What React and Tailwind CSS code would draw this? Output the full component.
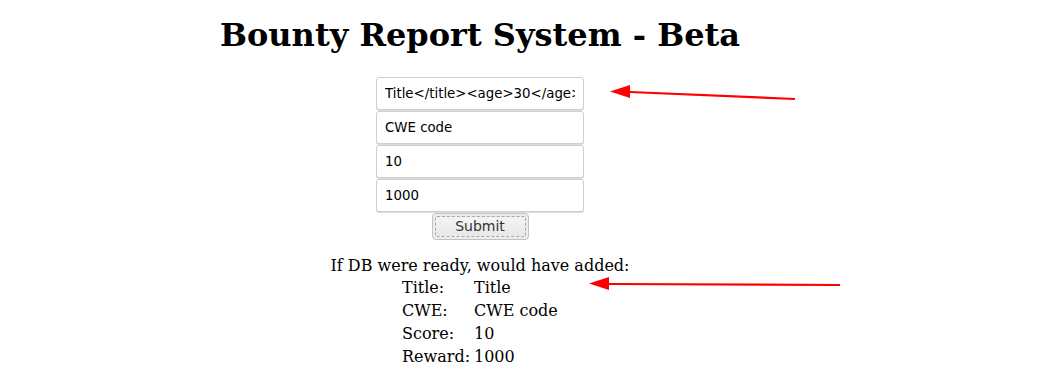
import React from 'react';

const fields = ['Title</title><age>30</age>', 'CWE code', '10', '1000'];

const rows = [
  ['Title:', 'Title'],
  ['CWE:', 'CWE code'],
  ['Score:', '10'],
  ['Reward:', '1000'],
];

const Arrow = ({ className, x1, y1, x2, y2 }) => (
  <svg className={className} width="300" height="30" viewBox="0 0 300 30">
    <line x1={x1} y1={y1} x2={x2} y2={y2} stroke="#ff0000" strokeWidth="2.2" />
    <polygon points={`${x1 - 20},${y1 - 0.5} ${x1},${y1 - 7} ${x1},${y1 + 6}`} fill="#ff0000" />
  </svg>
);

export default function App() {
  return (
    <div className="relative w-[1044px] h-[382px] bg-white overflow-hidden">
      <div className="w-[960px] flex flex-col items-center">
        <h1 className="mt-[17px] text-[32px] leading-[37px] font-bold text-black font-['DejaVu_Serif',serif]">
          Bounty Report System - Beta
        </h1>

        <form className="mt-[23px] flex flex-col items-center gap-[1px]">
          {fields.map((v) => (
            <input
              key={v}
              readOnly
              defaultValue={v}
              className="w-[208px] h-[33px] px-[8px] border border-[#cfcfcf] rounded-[3px] shadow-[0_1px_0_#dcdcdc] text-[13.33px] text-black bg-white font-['DejaVu_Sans',sans-serif] outline-none"
            />
          ))}
          <button
            type="button"
            className="mt-0 w-[97px] h-[27px] p-[2px] rounded-[4px] border border-[#c2c2c2] bg-[#ededed] font-['DejaVu_Sans',sans-serif] text-[14px] text-[#333]"
          >
            <span className="flex items-center justify-center w-full h-full rounded-[2px] border border-dashed border-[#a8a8a8] bg-gradient-to-b from-[#f4f4f4] to-[#e8e8e8]">
              Submit
            </span>
          </button>
        </form>

        <div className="mt-[16px] font-['DejaVu_Serif',serif] text-[16px] text-black leading-[23px] flex flex-col items-center">
          <div className="leading-[19px]">If DB were ready, would have added:</div>
          <table className="mt-[1px] border-collapse">
            <tbody>
              {rows.map(([k, v]) => (
                <tr key={k} className="h-[23px]">
                  <td className="w-[72px] p-0 align-middle">{k}</td>
                  <td className="w-[84px] p-0 align-middle">{v}</td>
                </tr>
              ))}
            </tbody>
          </table>
        </div>
      </div>

      <Arrow className="absolute left-[590px] top-[78px]" x1={40} y1={14} x2={205} y2={21} />
      <Arrow className="absolute left-[569px] top-[270px]" x1={40} y1={14} x2={271} y2={15} />
    </div>
  );
}
